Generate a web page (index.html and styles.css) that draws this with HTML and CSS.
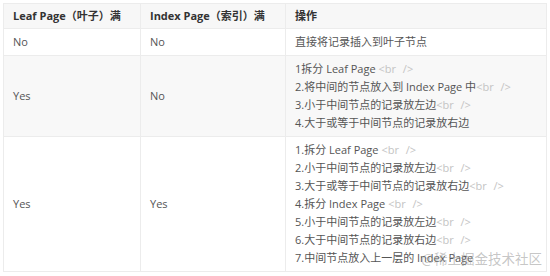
FILE: index.html
```html
<!DOCTYPE html>
<html lang="zh">
<head>
<meta charset="utf-8">
<link rel="stylesheet" href="styles.css">
</head>
<body>
<div class="wrap">
<table class="tbl">
  <colgroup><col class="c1"><col class="c2"><col class="c3"></colgroup>
  <thead>
    <tr><th>Leaf Page（叶子）满</th><th>Index Page（索引）满</th><th>操作</th></tr>
  </thead>
  <tbody>
    <tr><td>No</td><td>No</td><td>直接将记录插入到叶子节点</td></tr>
    <tr class="alt"><td>Yes</td><td>No</td><td>1拆分 Leaf Page <span class="br">&lt;br /&gt;</span><br>2.将中间的节点放入到 Index Page 中<span class="br">&lt;br /&gt;</span><br>3.小于中间节点的记录放左边<span class="br">&lt;br /&gt;</span><br>4.大于或等于中间节点的记录放右边</td></tr>
    <tr><td>Yes</td><td>Yes</td><td>1.拆分 Leaf Page <span class="br">&lt;br /&gt;</span><br>2.小于中间节点的记录放左边<span class="br">&lt;br /&gt;</span><br>3.大于或等于中间节点的记录放右边<span class="br">&lt;br /&gt;</span><br>4.拆分 Index Page <span class="br">&lt;br /&gt;</span><br>5.小于中间节点的记录放左边<span class="br">&lt;br /&gt;</span><br>6.大于中间节点的记录放右边<span class="br">&lt;br /&gt;</span><br>7.中间节点放入上一层的 Index Page</td></tr>
  </tbody>
</table>
<div class="mark">@稀土掘金技术社区</div>
</div>
</body>
</html>
```
FILE: styles.css
```css
html, body { margin: 0; padding: 0; background: #fff; }
body { padding: 3px 0 0 3px; font-family: "Open Sans", "Noto Sans CJK SC", sans-serif; }
.wrap { position: relative; width: 543px; }
.tbl { border-collapse: collapse; width: 543px; table-layout: fixed; font-size: 11px; line-height: 18px; color: #555; }
.c1 { width: 137px; }
.c2 { width: 145px; }
.c3 { width: 261px; }
.tbl th, .tbl td { border: 1px solid #ececec; padding: 4px 9px; text-align: left; vertical-align: middle; }
.tbl th { background: #f7f7f7; color: #333; font-weight: 700; padding: 3px 9px; }
.tbl tr.alt td { background: #f8f8f8; }
.br { color: #c4c4c4; word-spacing: 4px; }
.mark { position: absolute; right: 4px; bottom: 5px; font-size: 13.5px; color: rgba(150,150,150,0.55); font-family: "Noto Sans CJK SC", sans-serif; line-height: 18px; }
```
